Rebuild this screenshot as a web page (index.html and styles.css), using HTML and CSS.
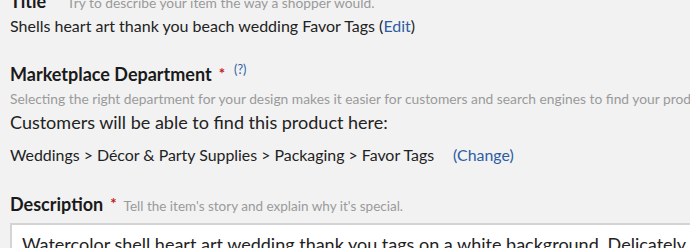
FILE: index.html
```html
<!DOCTYPE html>
<html lang="en">
    <head>
        <meta charset="UTF-8" />
        <meta name="viewport" content="width=device-width, initial-scale=1.0" />
        <title>Product details</title>
        <link rel="stylesheet" href="styles.css">
    </head>
    <body>
        <div class="form">
            <section class="field field-title">
                <div class="label-row">
                    <span class="label">Title</span>
                    <span class="hint">Try to describe your item the way a shopper would.</span>
                </div>
                <p class="value">Shells heart art thank you beach wedding Favor Tags (<a href="#">Edit</a>)</p>
            </section>

            <section class="field field-dept">
                <div class="label-row">
                    <span class="label">Marketplace Department</span>
                    <span class="req">*</span>
                    <a class="help" href="#">(?)</a>
                </div>
                <p class="hint hint-block">Selecting the right department for your design makes it easier for customers and search engines to find your product.</p>
                <p class="lead">Customers will be able to find this product here:</p>
                <p class="path">Weddings &gt; Décor &amp; Party Supplies &gt; Packaging &gt; Favor Tags <a class="change" href="#">(Change)</a></p>
            </section>

            <section class="field field-desc">
                <div class="label-row">
                    <span class="label">Description</span>
                    <span class="req">*</span>
                    <span class="hint">Tell the item's story and explain why it's special.</span>
                </div>
                <div class="textarea">Watercolor shell heart art wedding thank you tags on a white background. Delicately painted shells form a heart.</div>
            </section>
        </div>
    </body>
</html>
```

FILE: styles.css
```css
* {
    margin: 0;
    padding: 0;
    box-sizing: border-box;
}

body {
    background: #f2f2f2;
    color: #222;
    font-family: Lato, "Liberation Sans", sans-serif;
    overflow: hidden;
}

a {
    color: #2c5da3;
    text-decoration: none;
}

.form {
    padding: 0 0 0 10px;
    margin-top: -10px;
    white-space: nowrap;
}

.label-row {
    display: flex;
    align-items: baseline;
}

.label {
    font-size: 18px;
    font-weight: 700;
    color: #1a1a1a;
}

.req {
    color: #c4161c;
    font-size: 15px;
    font-weight: 700;
    margin-left: 7px;
    position: relative;
    top: -2px;
}

.help {
    font-size: 12.5px;
    margin-left: 9px;
    position: relative;
    top: -7px;
}

.hint {
    color: #9a9a9a;
    font-size: 13.8px;
    margin-left: 8px;
}

.field-title .hint {
    margin-left: 21px;
}

.hint-block {
    margin: 5px 0 0;
}

.value {
    font-size: 16px;
    margin-top: 4px;
}

.field-dept {
    margin-top: 28px;
}

.lead {
    font-size: 18px;
    margin-top: 4px;
}

.path {
    font-size: 15.9px;
    margin-top: 12px;
}

.change {
    margin-left: 15px;
}

.field-desc {
    margin-top: 29px;
}

.field-desc .hint {
    margin-left: 7px;
    font-size: 13.5px;
}

.textarea {
    margin-top: 8px;
    width: 720px;
    height: 80px;
    background: #fff;
    border: 2px solid #d4d4d4;
    padding: 8px 10px;
    font-size: 18px;
}
```
